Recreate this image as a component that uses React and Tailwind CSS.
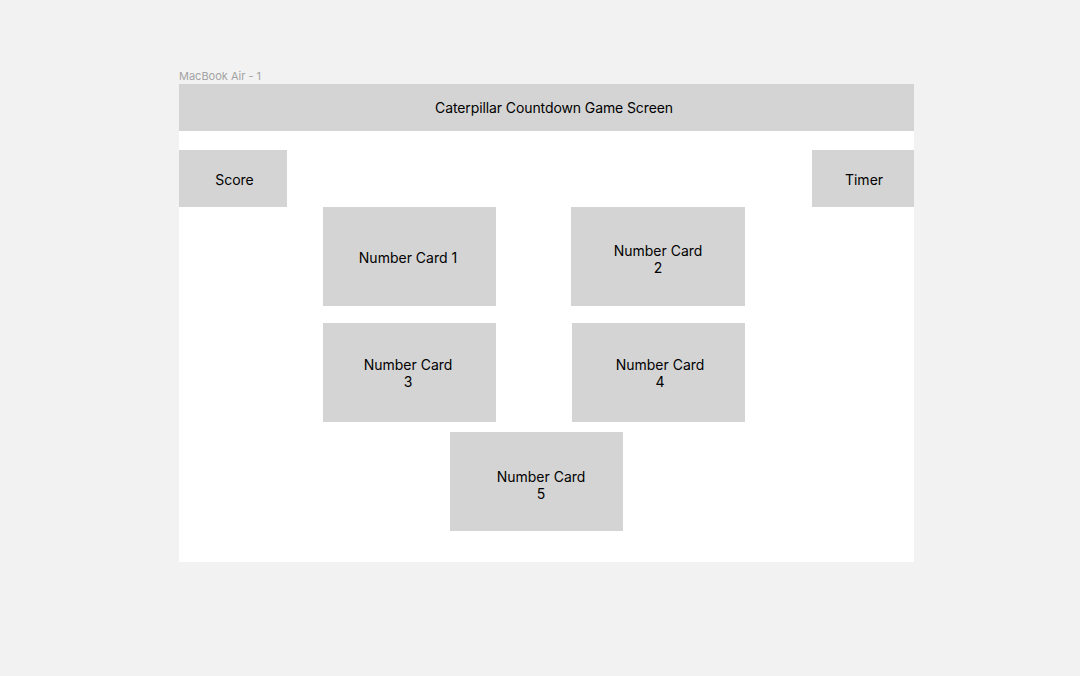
const Box = ({ className = '', children }) => (
  <div className={`bg-[#d4d4d4] flex items-center justify-center text-center text-[14px] leading-[17px] text-black ${className}`}>
    {children}
  </div>
);

const App = () => {
  return (
    <div className="w-full h-screen bg-[#f2f2f2] pt-[68px] pl-[179px]" style={{ fontFamily: 'Inter, "Noto Sans", sans-serif' }}>
      {/* Frame label */}
      <div className="h-[16px] text-[11px] leading-[16px] text-[#a3a3a3]">MacBook Air - 1</div>

      {/* Frame */}
      <div className="w-[735px] h-[478px] bg-white flex flex-col">
        <Box className="h-[47px] w-full pl-[15px] tracking-[-0.1px]">Caterpillar Countdown Game Screen</Box>

        <div className="mt-[19px] flex justify-between">
          <Box className="w-[108px] h-[57px] pl-[3px] pt-[2px]">Score</Box>
          <Box className="w-[102px] h-[57px] pl-[2px] pt-[2px]">Timer</Box>
        </div>

        <div className="flex ml-[144px] gap-[75px]">
          <Box className="w-[173px] h-[99px] pr-[3px] pt-[2px]">Number Card 1</Box>
          <Box className="w-[174px] h-[99px] pt-[4px]">Number Card<br />2</Box>
        </div>

        <div className="flex ml-[144px] gap-[76px] mt-[17px]">
          <Box className="w-[173px] h-[99px] pr-[3px]">Number Card<br />3</Box>
          <Box className="w-[173px] h-[99px] pl-[3px]">Number Card<br />4</Box>
        </div>

        <div className="flex ml-[271px] mt-[10px]">
          <Box className="w-[173px] h-[99px] pl-[9px] pt-[6px]">Number Card<br />5</Box>
        </div>
      </div>
    </div>
  );
};

export default App;
